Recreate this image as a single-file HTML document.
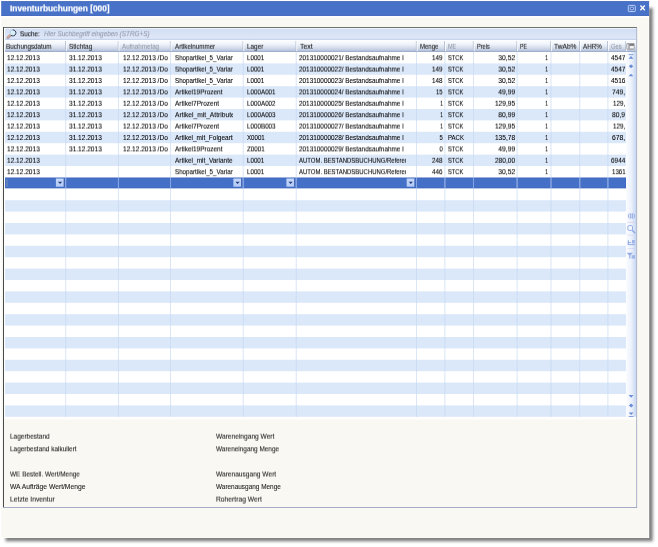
<!DOCTYPE html>
<html><head><meta charset="utf-8"><title>Inventurbuchungen [000]</title>
<style>
html,body{margin:0;padding:0;}
body{width:658px;height:547px;overflow:hidden;background:#fff;position:relative;font-family:"Liberation Sans",sans-serif;font-size:6.9px;color:#000;-webkit-text-stroke:0.08px #000;}
#bg{position:absolute;left:0;top:0;}
.t{position:absolute;white-space:nowrap;overflow:hidden;line-height:12px;height:12px;}
.t span{display:inline-block;transform-origin:0 50%;white-space:pre;}
.r{text-align:right;}
.r span{transform-origin:100% 50%;}
.g{color:#9097a6;-webkit-text-stroke:0.06px #9097a6;}
.h{color:#1c1c1c;}
#title{color:#fff;font-weight:bold;font-size:8.2px;-webkit-text-stroke:0.2px #fff;}
.lbl{color:#1e1e1e;}
.f1{filter:url(#f1);}
.f2{filter:url(#f2);}
.f3{filter:url(#f3);}
.f4{filter:url(#f4);}
.f5{filter:url(#f5);}
.f6{filter:url(#f6);}
.f7{filter:url(#f7);}
.f8{filter:url(#f8);}
.f9{filter:url(#f9);}

</style></head><body>
<svg id="bg" width="658" height="547" viewBox="0 0 658 547">
<defs>
<filter id="sh" x="-5%" y="-5%" width="110%" height="110%"><feGaussianBlur stdDeviation="1.7"/></filter>
<filter id="f1" x="-2%" y="-20%" width="104%" height="140%" color-interpolation-filters="sRGB"><feConvolveMatrix order="1 3" kernelMatrix="0 0.9 0.1" divisor="1" edgeMode="none" preserveAlpha="false"/></filter>
<filter id="f2" x="-2%" y="-20%" width="104%" height="140%" color-interpolation-filters="sRGB"><feConvolveMatrix order="1 3" kernelMatrix="0 0.8 0.2" divisor="1" edgeMode="none" preserveAlpha="false"/></filter>
<filter id="f3" x="-2%" y="-20%" width="104%" height="140%" color-interpolation-filters="sRGB"><feConvolveMatrix order="1 3" kernelMatrix="0 0.7 0.3" divisor="1" edgeMode="none" preserveAlpha="false"/></filter>
<filter id="f4" x="-2%" y="-20%" width="104%" height="140%" color-interpolation-filters="sRGB"><feConvolveMatrix order="1 3" kernelMatrix="0 0.6 0.4" divisor="1" edgeMode="none" preserveAlpha="false"/></filter>
<filter id="f5" x="-2%" y="-20%" width="104%" height="140%" color-interpolation-filters="sRGB"><feConvolveMatrix order="1 3" kernelMatrix="0 0.5 0.5" divisor="1" edgeMode="none" preserveAlpha="false"/></filter>
<filter id="f6" x="-2%" y="-20%" width="104%" height="140%" color-interpolation-filters="sRGB"><feConvolveMatrix order="1 3" kernelMatrix="0 0.4 0.6" divisor="1" edgeMode="none" preserveAlpha="false"/></filter>
<filter id="f7" x="-2%" y="-20%" width="104%" height="140%" color-interpolation-filters="sRGB"><feConvolveMatrix order="1 3" kernelMatrix="0 0.3 0.7" divisor="1" edgeMode="none" preserveAlpha="false"/></filter>
<filter id="f8" x="-2%" y="-20%" width="104%" height="140%" color-interpolation-filters="sRGB"><feConvolveMatrix order="1 3" kernelMatrix="0 0.2 0.8" divisor="1" edgeMode="none" preserveAlpha="false"/></filter>
<filter id="f9" x="-2%" y="-20%" width="104%" height="140%" color-interpolation-filters="sRGB"><feConvolveMatrix order="1 3" kernelMatrix="0 0.1 0.9" divisor="1" edgeMode="none" preserveAlpha="false"/></filter>
<linearGradient id="hd" x1="0" y1="0" x2="0" y2="1"><stop offset="0" stop-color="#fdfeff"/><stop offset="0.35" stop-color="#f0f4fa"/><stop offset="0.7" stop-color="#d2dbeb"/><stop offset="1" stop-color="#adbbd7"/></linearGradient>
<linearGradient id="sb" x1="0" y1="0" x2="1" y2="0"><stop offset="0" stop-color="#fbfcff"/><stop offset="0.55" stop-color="#eaf0fb"/><stop offset="1" stop-color="#c4d5f1"/></linearGradient>
<linearGradient id="sr" x1="0" y1="0" x2="0" y2="1"><stop offset="0" stop-color="#d2def4"/><stop offset="1" stop-color="#dfe8f8"/></linearGradient>
<linearGradient id="dd" x1="0" y1="0" x2="0" y2="1"><stop offset="0" stop-color="#c6d8fa"/><stop offset="1" stop-color="#b2caf6"/></linearGradient>
</defs>
<rect x="5.5" y="8.0" width="647.3" height="533.3" fill="#000" opacity="0.5" filter="url(#sh)"/>
<rect x="1.2" y="1.3" width="647.9" height="536.6" fill="#faf8f3"/>
<rect x="648.3000000000001" y="1.3" width="0.8" height="536.6" fill="#ffffff"/>
<rect x="1.2" y="537.1" width="647.9" height="0.8" fill="#ffffff"/>
<rect x="1.2" y="15.8" width="647.9" height="1.9" fill="#fefefd"/>
<rect x="1.2" y="1.3" width="647.9" height="14.6" fill="#4872c8"/>
<rect x="1.2" y="1.3" width="647.9" height="0.7" fill="#3f65ba"/>
<rect x="1.2" y="15.2" width="647.9" height="0.7" fill="#3f65ba"/>
<rect x="628.3" y="5.4" width="7.0" height="6.2" rx="0.8" fill="none" stroke="#c9d9fb" stroke-width="0.9"/>
<rect x="630.2" y="7.2" width="3.2" height="2.6" rx="0.5" fill="#3a5cae" stroke="#c9d9fb" stroke-width="0.8"/>
<path d="M640.4 5.5 L644.8 10.3 M644.8 5.5 L640.4 10.3" stroke="#ffffff" stroke-width="1.35" fill="none"/>
<rect x="4" y="28" width="632.6" height="391.40" fill="#fff"/>
<rect x="5.1" y="28.6" width="631.10" height="11.0" fill="url(#sr)"/>
<rect x="5.1" y="38.9" width="631.10" height="0.8" fill="#b7c7e5"/>
<rect x="5.1" y="40" width="631.10" height="11.7" fill="url(#hd)"/>
<rect x="5.1" y="51.1" width="631.10" height="0.8" fill="#95a6c6"/>
<rect x="5.1" y="63.400" width="620.90" height="11.4" fill="#dbe8fa"/>
<rect x="5.1" y="86.200" width="620.90" height="11.4" fill="#dbe8fa"/>
<rect x="5.1" y="109.000" width="620.90" height="11.4" fill="#dbe8fa"/>
<rect x="5.1" y="131.800" width="620.90" height="11.4" fill="#dbe8fa"/>
<rect x="5.1" y="154.600" width="620.90" height="11.4" fill="#dbe8fa"/>
<rect x="5.1" y="177.700" width="620.90" height="10.500" fill="#4570c8"/>
<rect x="5.35" y="177.950" width="620.40" height="10.000" fill="none" stroke="#3b60b6" stroke-width="0.5"/>
<rect x="6.4" y="179.100" width="1.1" height="7.4" fill="#8293ad" opacity="0.8"/>
<rect x="5.1" y="200.200" width="620.90" height="11.4" fill="#dbe8fa"/>
<rect x="5.1" y="223.000" width="620.90" height="11.4" fill="#dbe8fa"/>
<rect x="5.1" y="245.800" width="620.90" height="11.4" fill="#dbe8fa"/>
<rect x="5.1" y="268.600" width="620.90" height="11.4" fill="#dbe8fa"/>
<rect x="5.1" y="291.400" width="620.90" height="11.4" fill="#dbe8fa"/>
<rect x="5.1" y="314.200" width="620.90" height="11.4" fill="#dbe8fa"/>
<rect x="5.1" y="337.000" width="620.90" height="11.4" fill="#dbe8fa"/>
<rect x="5.1" y="359.800" width="620.90" height="11.4" fill="#dbe8fa"/>
<rect x="5.1" y="382.600" width="620.90" height="11.4" fill="#dbe8fa"/>
<rect x="5.1" y="405.400" width="620.90" height="11.4" fill="#dbe8fa"/>
<rect x="65.25" y="52.0" width="0.9" height="364.80" fill="#c3d5f1" opacity="0.7"/>
<rect x="65.25" y="177.70" width="0.9" height="10.500" fill="#86a3e2"/>
<rect x="117.95" y="52.0" width="0.9" height="364.80" fill="#c3d5f1" opacity="0.7"/>
<rect x="117.95" y="177.70" width="0.9" height="10.500" fill="#86a3e2"/>
<rect x="170.05" y="52.0" width="0.9" height="364.80" fill="#c3d5f1" opacity="0.7"/>
<rect x="170.05" y="177.70" width="0.9" height="10.500" fill="#86a3e2"/>
<rect x="242.75" y="52.0" width="0.9" height="364.80" fill="#c3d5f1" opacity="0.7"/>
<rect x="242.75" y="177.70" width="0.9" height="10.500" fill="#86a3e2"/>
<rect x="295.75" y="52.0" width="0.9" height="364.80" fill="#c3d5f1" opacity="0.7"/>
<rect x="295.75" y="177.70" width="0.9" height="10.500" fill="#86a3e2"/>
<rect x="416.05" y="52.0" width="0.9" height="364.80" fill="#c3d5f1" opacity="0.7"/>
<rect x="416.05" y="177.70" width="0.9" height="10.500" fill="#86a3e2"/>
<rect x="444.45" y="52.0" width="0.9" height="364.80" fill="#c3d5f1" opacity="0.7"/>
<rect x="444.45" y="177.70" width="0.9" height="10.500" fill="#86a3e2"/>
<rect x="473.05" y="52.0" width="0.9" height="364.80" fill="#c3d5f1" opacity="0.7"/>
<rect x="473.05" y="177.70" width="0.9" height="10.500" fill="#86a3e2"/>
<rect x="516.65" y="52.0" width="0.9" height="364.80" fill="#c3d5f1" opacity="0.7"/>
<rect x="516.65" y="177.70" width="0.9" height="10.500" fill="#86a3e2"/>
<rect x="550.55" y="52.0" width="0.9" height="364.80" fill="#c3d5f1" opacity="0.7"/>
<rect x="550.55" y="177.70" width="0.9" height="10.500" fill="#86a3e2"/>
<rect x="579.35" y="52.0" width="0.9" height="364.80" fill="#c3d5f1" opacity="0.7"/>
<rect x="579.35" y="177.70" width="0.9" height="10.500" fill="#86a3e2"/>
<rect x="607.45" y="52.0" width="0.9" height="364.80" fill="#c3d5f1" opacity="0.7"/>
<rect x="607.45" y="177.70" width="0.9" height="10.500" fill="#86a3e2"/>
<rect x="65.10" y="41" width="0.8" height="10.2" fill="#a7b3c8"/>
<rect x="65.90" y="41" width="0.8" height="10.2" fill="#ffffff"/>
<rect x="117.80" y="41" width="0.8" height="10.2" fill="#a7b3c8"/>
<rect x="118.60" y="41" width="0.8" height="10.2" fill="#ffffff"/>
<rect x="169.90" y="41" width="0.8" height="10.2" fill="#a7b3c8"/>
<rect x="170.70" y="41" width="0.8" height="10.2" fill="#ffffff"/>
<rect x="242.60" y="41" width="0.8" height="10.2" fill="#a7b3c8"/>
<rect x="243.40" y="41" width="0.8" height="10.2" fill="#ffffff"/>
<rect x="295.60" y="41" width="0.8" height="10.2" fill="#a7b3c8"/>
<rect x="296.40" y="41" width="0.8" height="10.2" fill="#ffffff"/>
<rect x="415.90" y="41" width="0.8" height="10.2" fill="#a7b3c8"/>
<rect x="416.70" y="41" width="0.8" height="10.2" fill="#ffffff"/>
<rect x="444.30" y="41" width="0.8" height="10.2" fill="#a7b3c8"/>
<rect x="445.10" y="41" width="0.8" height="10.2" fill="#ffffff"/>
<rect x="472.90" y="41" width="0.8" height="10.2" fill="#a7b3c8"/>
<rect x="473.70" y="41" width="0.8" height="10.2" fill="#ffffff"/>
<rect x="516.50" y="41" width="0.8" height="10.2" fill="#a7b3c8"/>
<rect x="517.30" y="41" width="0.8" height="10.2" fill="#ffffff"/>
<rect x="550.40" y="41" width="0.8" height="10.2" fill="#a7b3c8"/>
<rect x="551.20" y="41" width="0.8" height="10.2" fill="#ffffff"/>
<rect x="579.20" y="41" width="0.8" height="10.2" fill="#a7b3c8"/>
<rect x="580.00" y="41" width="0.8" height="10.2" fill="#ffffff"/>
<rect x="607.30" y="41" width="0.8" height="10.2" fill="#a7b3c8"/>
<rect x="608.10" y="41" width="0.8" height="10.2" fill="#ffffff"/>
<rect x="625.40" y="41" width="0.8" height="10.2" fill="#a7b3c8"/>
<rect x="626.20" y="41" width="0.8" height="10.2" fill="#ffffff"/>
<rect x="55.90" y="178.50" width="7.90" height="8.20" fill="url(#dd)"/>
<rect x="63.80" y="178.50" width="0.7" height="8.20" fill="#3a5aa8"/>
<path d="M57.95 181.70 L62.15 181.70 L60.05 183.90 Z" fill="#253a78"/>
<rect x="233.40" y="178.50" width="7.90" height="8.20" fill="url(#dd)"/>
<rect x="241.30" y="178.50" width="0.7" height="8.20" fill="#3a5aa8"/>
<path d="M235.45 181.70 L239.65 181.70 L237.55 183.90 Z" fill="#253a78"/>
<rect x="286.40" y="178.50" width="7.90" height="8.20" fill="url(#dd)"/>
<rect x="294.30" y="178.50" width="0.7" height="8.20" fill="#3a5aa8"/>
<path d="M288.45 181.70 L292.65 181.70 L290.55 183.90 Z" fill="#253a78"/>
<rect x="406.70" y="178.50" width="7.90" height="8.20" fill="url(#dd)"/>
<rect x="414.60" y="178.50" width="0.7" height="8.20" fill="#3a5aa8"/>
<path d="M408.75 181.70 L412.95 181.70 L410.85 183.90 Z" fill="#253a78"/>
<rect x="626.2" y="52" width="10.00" height="364.80" fill="url(#sb)"/>
<g><rect x="626.3" y="42.9" width="8.4" height="6.8" rx="1.1" fill="#a6a7aa"/><rect x="627.3" y="44.2" width="0.9" height="4.4" fill="#f3f3f3"/><rect x="629.5" y="44.2" width="4.5" height="1.2" fill="#6d6e72"/><rect x="629.9" y="46.1" width="3.9" height="2.3" fill="#f6f6f6"/></g>
<rect x="628.6" y="54.3" width="4.8" height="0.8" fill="#6a8cd9"/><path d="M628.6 58.7 L631 56.1 L633.4 58.7 Z" fill="#6a8cd9"/>
<path d="M628.8 66.2 L631 64.2 L633.2 66.2 L631 68.2 Z" fill="#6a8cd9"/>
<path d="M628.6 76.3 L631 73.8 L633.4 76.3 Z" fill="#6a8cd9"/>
<path d="M628.7 395.1 L633.5 395.1 L631.1 397.7 Z" fill="#6a8cd9"/>
<path d="M628.9 405.4 L631.1 403.4 L633.3 405.4 L631.1 407.4 Z" fill="#6a8cd9"/>
<path d="M628.7 412.4 L633.5 412.4 L631.1 415.0 Z" fill="#6a8cd9"/><rect x="628.7" y="416.1" width="4.8" height="0.8" fill="#6a8cd9"/>
<g fill="none" stroke="#8ea7e2" stroke-width="0.9"><path d="M629.2 213.6 Q627.6 216 629.2 218.4"/><path d="M633.8 213.6 Q635.4 216 633.8 218.4"/><path d="M630.7 213.4 V218.6 M632.3 213.4 V218.6" stroke-width="1.0"/></g>
<rect x="627.5" y="221.9" width="7.5" height="0.6" fill="#d9c6dc"/>
<g fill="none" stroke="#8ea7e2" stroke-width="0.9"><rect x="627.9" y="225.6" width="4.6" height="4.8" rx="1.2" fill="#f4f8ff"/><path d="M632.2 230.2 L635.2 233.2" stroke-width="1.5"/></g>
<rect x="627.5" y="234.8" width="7.5" height="0.6" fill="#d5d5e8"/>
<g fill="#8ea7e2"><rect x="627.8" y="240.2" width="1.0" height="4.8"/><rect x="627.8" y="242.2" width="3.4" height="0.9"/><rect x="627.8" y="244.2" width="7.2" height="0.9"/><rect x="632.0" y="240.0" width="2.8" height="3.4" opacity="0.8"/></g>
<rect x="627.5" y="248.5" width="7.5" height="0.6" fill="#cfc8ec"/>
<g fill="#8ea7e2"><path d="M626.6 252.8 L633.0 252.8 L630.4 255.6 L630.4 258.6 L629.2 258.6 L629.2 255.6 Z" opacity="0.9"/><rect x="631.6" y="255.2" width="3.4" height="3.4" opacity="0.75"/></g>
<g><path d="M10.6 35.3 L7.9 37.5" stroke="#4a4660" stroke-width="2.6" stroke-linecap="round" opacity="0.55"/><path d="M10.5 35.0 L7.7 37.2" stroke="#d3a996" stroke-width="2.0" stroke-linecap="round"/><circle cx="13.0" cy="32.8" r="2.9" fill="#d6f1f5"/><path d="M12.6 29.9 A3.0 3.0 0 1 1 10.9 35.1" fill="none" stroke="#2d3355" stroke-width="0.95"/><path d="M10.2 33.6 A3.0 3.0 0 0 1 12.4 29.9" fill="none" stroke="#aebfe0" stroke-width="0.7"/></g>
<rect x="3.0" y="27.1" width="633.90" height="0.85" fill="#565b58"/>
<rect x="3.0" y="27.0" width="1.0" height="480.50" fill="#474c4a"/>
<rect x="636.20" y="28.0" width="0.9" height="479.90" fill="#a4aec8"/>
<rect x="4.0" y="507.00" width="633.10" height="0.9" fill="#99a3bf"/>
</svg>
<div id="title" class="t f4" style="left:10.30px;top:3px;width:130.00px;"><span style="transform:scaleX(1.0183)">Inventurbuchungen [000]</span></div>
<div class="t f3" style="left:19.80px;top:28px;width:30.00px;"><span style="transform:scaleX(0.9183)">Suche:</span></div>
<div class="t g f2" style="left:43.90px;top:28px;width:140.00px;font-style:italic;"><span style="transform:scaleX(0.9267)">Hier Suchbegriff eingeben (STRG+S)</span></div>
<div class="t h f8" style="left:6.30px;top:40px;width:58.60px;"><span style="transform:scaleX(0.9154)">Buchungsdatum</span></div>
<div class="t h f8" style="left:69.00px;top:40px;width:48.60px;"><span style="transform:scaleX(0.9355)">Stichtag</span></div>
<div class="t g f8" style="left:122.40px;top:40px;width:47.30px;"><span style="transform:scaleX(0.9049)">Aufnahmetag</span></div>
<div class="t h f8" style="left:174.50px;top:40px;width:67.90px;"><span style="transform:scaleX(0.9050)">Artikelnummer</span></div>
<div class="t h f8" style="left:246.50px;top:40px;width:48.90px;"><span style="transform:scaleX(0.9248)">Lager</span></div>
<div class="t h f8" style="left:299.70px;top:40px;width:116.00px;"><span style="transform:scaleX(1.0126)">Text</span></div>
<div class="t h f8" style="left:419.50px;top:40px;width:24.60px;"><span style="transform:scaleX(0.8729)">Menge</span></div>
<div class="t g f8" style="left:447.90px;top:40px;width:24.80px;"><span style="transform:scaleX(0.8024)">ME</span></div>
<div class="t h f8" style="left:476.70px;top:40px;width:39.60px;"><span style="transform:scaleX(0.8151)">Preis</span></div>
<div class="t h f8" style="left:520.10px;top:40px;width:30.10px;"><span style="transform:scaleX(0.7606)">PE</span></div>
<div class="t h f8" style="left:554.00px;top:40px;width:25.00px;"><span style="transform:scaleX(0.9626)">TwAb%</span></div>
<div class="t h f8" style="left:582.80px;top:40px;width:24.30px;"><span style="transform:scaleX(0.9088)">AHR%</span></div>
<div class="t g f8" style="left:610.90px;top:40px;width:14.30px;"><span style="transform:scaleX(0.8544)">Ges</span></div>
<div class="t f2" style="left:7.30px;top:52px;width:48.10px;"><span style="transform:scaleX(0.9507)">12.12.2013</span></div>
<div class="t f2" style="left:69.30px;top:52px;width:48.70px;"><span style="transform:scaleX(0.9507)">31.12.2013</span></div>
<div class="t f2" style="left:122.70px;top:52px;width:47.40px;"><span style="transform:scaleX(0.9507)">12.12.2013 /Do</span></div>
<div class="t f2" style="left:174.50px;top:52px;width:58.40px;"><span style="transform:scaleX(0.9034)">Shopartikel_5_Variante</span></div>
<div class="t f2" style="left:246.60px;top:52px;width:39.30px;"><span style="transform:scaleX(0.9024)">L0001</span></div>
<div class="t f2" style="left:299.40px;top:52px;width:106.80px;"><span style="transform:scaleX(0.9285)">201310000021/ Bestandsaufnahme l</span></div>
<div class="t r f2" style="left:417.50px;top:52px;width:25.20px;"><span style="transform:scaleX(0.9130)">149</span></div>
<div class="t f2" style="left:447.90px;top:52px;width:25.20px;"><span style="transform:scaleX(0.8319)">STCK</span></div>
<div class="t r f2" style="left:474.50px;top:52px;width:40.40px;"><span style="transform:scaleX(0.9855)">30,52</span></div>
<div class="t r f2" style="left:518.10px;top:52px;width:30.10px;"><span style="transform:scaleX(0.7024)">1</span></div>
<div class="t f2" style="left:610.90px;top:52px;width:14.70px;"><span style="transform:scaleX(0.9450)">4547</span></div>
<div class="t f6" style="left:7.30px;top:63px;width:48.10px;"><span style="transform:scaleX(0.9507)">12.12.2013</span></div>
<div class="t f6" style="left:69.30px;top:63px;width:48.70px;"><span style="transform:scaleX(0.9507)">31.12.2013</span></div>
<div class="t f6" style="left:122.70px;top:63px;width:47.40px;"><span style="transform:scaleX(0.9507)">12.12.2013 /Do</span></div>
<div class="t f6" style="left:174.50px;top:63px;width:58.40px;"><span style="transform:scaleX(0.9034)">Shopartikel_5_Variante</span></div>
<div class="t f6" style="left:246.60px;top:63px;width:39.30px;"><span style="transform:scaleX(0.9024)">L0001</span></div>
<div class="t f6" style="left:299.40px;top:63px;width:106.80px;"><span style="transform:scaleX(0.9285)">201310000022/ Bestandsaufnahme l</span></div>
<div class="t r f6" style="left:417.50px;top:63px;width:25.20px;"><span style="transform:scaleX(0.9130)">149</span></div>
<div class="t f6" style="left:447.90px;top:63px;width:25.20px;"><span style="transform:scaleX(0.8319)">STCK</span></div>
<div class="t r f6" style="left:474.50px;top:63px;width:40.40px;"><span style="transform:scaleX(0.9855)">30,52</span></div>
<div class="t r f6" style="left:518.10px;top:63px;width:30.10px;"><span style="transform:scaleX(0.7024)">1</span></div>
<div class="t f6" style="left:610.90px;top:63px;width:14.70px;"><span style="transform:scaleX(0.9450)">4547</span></div>
<div class="t" style="left:7.30px;top:75px;width:48.10px;"><span style="transform:scaleX(0.9507)">12.12.2013</span></div>
<div class="t" style="left:69.30px;top:75px;width:48.70px;"><span style="transform:scaleX(0.9507)">31.12.2013</span></div>
<div class="t" style="left:122.70px;top:75px;width:47.40px;"><span style="transform:scaleX(0.9507)">12.12.2013 /Do</span></div>
<div class="t" style="left:174.50px;top:75px;width:58.40px;"><span style="transform:scaleX(0.9034)">Shopartikel_5_Variante</span></div>
<div class="t" style="left:246.60px;top:75px;width:39.30px;"><span style="transform:scaleX(0.9024)">L0001</span></div>
<div class="t" style="left:299.40px;top:75px;width:106.80px;"><span style="transform:scaleX(0.9285)">201310000023/ Bestandsaufnahme l</span></div>
<div class="t r" style="left:417.50px;top:75px;width:25.20px;"><span style="transform:scaleX(0.9130)">148</span></div>
<div class="t" style="left:447.90px;top:75px;width:25.20px;"><span style="transform:scaleX(0.8319)">STCK</span></div>
<div class="t r" style="left:474.50px;top:75px;width:40.40px;"><span style="transform:scaleX(0.9855)">30,52</span></div>
<div class="t r" style="left:518.10px;top:75px;width:30.10px;"><span style="transform:scaleX(0.7024)">1</span></div>
<div class="t" style="left:610.90px;top:75px;width:14.70px;"><span style="transform:scaleX(0.9450)">4516</span></div>
<div class="t f4" style="left:7.30px;top:86px;width:48.10px;"><span style="transform:scaleX(0.9507)">12.12.2013</span></div>
<div class="t f4" style="left:69.30px;top:86px;width:48.70px;"><span style="transform:scaleX(0.9507)">31.12.2013</span></div>
<div class="t f4" style="left:122.70px;top:86px;width:47.40px;"><span style="transform:scaleX(0.9507)">12.12.2013 /Do</span></div>
<div class="t f4" style="left:174.50px;top:86px;width:58.40px;"><span style="transform:scaleX(0.9394)">Artikel19Prozent</span></div>
<div class="t f4" style="left:246.60px;top:86px;width:39.30px;"><span style="transform:scaleX(0.9102)">L000A001</span></div>
<div class="t f4" style="left:299.40px;top:86px;width:106.80px;"><span style="transform:scaleX(0.9285)">201310000024/ Bestandsaufnahme l</span></div>
<div class="t r f4" style="left:417.50px;top:86px;width:25.20px;"><span style="transform:scaleX(0.8603)">15</span></div>
<div class="t f4" style="left:447.90px;top:86px;width:25.20px;"><span style="transform:scaleX(0.8319)">STCK</span></div>
<div class="t r f4" style="left:474.50px;top:86px;width:40.40px;"><span style="transform:scaleX(0.9797)">49,99</span></div>
<div class="t r f4" style="left:518.10px;top:86px;width:30.10px;"><span style="transform:scaleX(0.7024)">1</span></div>
<div class="t f4" style="left:612.20px;top:86px;width:13.40px;"><span style="transform:scaleX(0.9835)">749,</span></div>
<div class="t f8" style="left:7.30px;top:97px;width:48.10px;"><span style="transform:scaleX(0.9507)">12.12.2013</span></div>
<div class="t f8" style="left:69.30px;top:97px;width:48.70px;"><span style="transform:scaleX(0.9507)">31.12.2013</span></div>
<div class="t f8" style="left:122.70px;top:97px;width:47.40px;"><span style="transform:scaleX(0.9507)">12.12.2013 /Do</span></div>
<div class="t f8" style="left:174.50px;top:97px;width:58.40px;"><span style="transform:scaleX(0.9436)">Artikel7Prozent</span></div>
<div class="t f8" style="left:246.60px;top:97px;width:39.30px;"><span style="transform:scaleX(0.9102)">L000A002</span></div>
<div class="t f8" style="left:299.40px;top:97px;width:106.80px;"><span style="transform:scaleX(0.9285)">201310000025/ Bestandsaufnahme l</span></div>
<div class="t r f8" style="left:417.50px;top:97px;width:25.20px;"><span style="transform:scaleX(0.7024)">1</span></div>
<div class="t f8" style="left:447.90px;top:97px;width:25.20px;"><span style="transform:scaleX(0.8319)">STCK</span></div>
<div class="t r f8" style="left:474.50px;top:97px;width:40.40px;"><span style="transform:scaleX(0.9583)">129,95</span></div>
<div class="t r f8" style="left:518.10px;top:97px;width:30.10px;"><span style="transform:scaleX(0.7024)">1</span></div>
<div class="t f8" style="left:612.90px;top:97px;width:12.70px;"><span style="transform:scaleX(0.9090)">129,</span></div>
<div class="t f2" style="left:7.30px;top:109px;width:48.10px;"><span style="transform:scaleX(0.9507)">12.12.2013</span></div>
<div class="t f2" style="left:69.30px;top:109px;width:48.70px;"><span style="transform:scaleX(0.9507)">31.12.2013</span></div>
<div class="t f2" style="left:122.70px;top:109px;width:47.40px;"><span style="transform:scaleX(0.9507)">12.12.2013 /Do</span></div>
<div class="t f2" style="left:174.50px;top:109px;width:58.40px;"><span style="transform:scaleX(0.9684)">Artikel_mit_Attributen</span></div>
<div class="t f2" style="left:246.60px;top:109px;width:39.30px;"><span style="transform:scaleX(0.9102)">L000A003</span></div>
<div class="t f2" style="left:299.40px;top:109px;width:106.80px;"><span style="transform:scaleX(0.9285)">201310000026/ Bestandsaufnahme l</span></div>
<div class="t r f2" style="left:417.50px;top:109px;width:25.20px;"><span style="transform:scaleX(0.7024)">1</span></div>
<div class="t f2" style="left:447.90px;top:109px;width:25.20px;"><span style="transform:scaleX(0.8319)">STCK</span></div>
<div class="t r f2" style="left:474.50px;top:109px;width:40.40px;"><span style="transform:scaleX(0.9797)">80,99</span></div>
<div class="t r f2" style="left:518.10px;top:109px;width:30.10px;"><span style="transform:scaleX(0.7024)">1</span></div>
<div class="t f2" style="left:611.90px;top:109px;width:13.70px;"><span style="transform:scaleX(0.9760)">80,9</span></div>
<div class="t f6" style="left:7.30px;top:120px;width:48.10px;"><span style="transform:scaleX(0.9507)">12.12.2013</span></div>
<div class="t f6" style="left:69.30px;top:120px;width:48.70px;"><span style="transform:scaleX(0.9507)">31.12.2013</span></div>
<div class="t f6" style="left:122.70px;top:120px;width:47.40px;"><span style="transform:scaleX(0.9507)">12.12.2013 /Do</span></div>
<div class="t f6" style="left:174.50px;top:120px;width:58.40px;"><span style="transform:scaleX(0.9436)">Artikel7Prozent</span></div>
<div class="t f6" style="left:246.60px;top:120px;width:39.30px;"><span style="transform:scaleX(0.9102)">L000B003</span></div>
<div class="t f6" style="left:299.40px;top:120px;width:106.80px;"><span style="transform:scaleX(0.9285)">201310000027/ Bestandsaufnahme l</span></div>
<div class="t r f6" style="left:417.50px;top:120px;width:25.20px;"><span style="transform:scaleX(0.7024)">1</span></div>
<div class="t f6" style="left:447.90px;top:120px;width:25.20px;"><span style="transform:scaleX(0.8319)">STCK</span></div>
<div class="t r f6" style="left:474.50px;top:120px;width:40.40px;"><span style="transform:scaleX(0.9583)">129,95</span></div>
<div class="t r f6" style="left:518.10px;top:120px;width:30.10px;"><span style="transform:scaleX(0.7024)">1</span></div>
<div class="t f6" style="left:612.90px;top:120px;width:12.70px;"><span style="transform:scaleX(0.9090)">129,</span></div>
<div class="t" style="left:7.30px;top:132px;width:48.10px;"><span style="transform:scaleX(0.9507)">12.12.2013</span></div>
<div class="t" style="left:69.30px;top:132px;width:48.70px;"><span style="transform:scaleX(0.9507)">31.12.2013</span></div>
<div class="t" style="left:122.70px;top:132px;width:47.40px;"><span style="transform:scaleX(0.9507)">12.12.2013 /Do</span></div>
<div class="t" style="left:174.50px;top:132px;width:58.40px;"><span style="transform:scaleX(0.9399)">Artikel_mit_Folgeartikel</span></div>
<div class="t" style="left:246.60px;top:132px;width:39.30px;"><span style="transform:scaleX(0.8928)">X0001</span></div>
<div class="t" style="left:299.40px;top:132px;width:106.80px;"><span style="transform:scaleX(0.9285)">201310000028/ Bestandsaufnahme l</span></div>
<div class="t r" style="left:417.50px;top:132px;width:25.20px;"><span style="transform:scaleX(0.8585)">5</span></div>
<div class="t" style="left:447.90px;top:132px;width:25.20px;"><span style="transform:scaleX(0.8705)">PACK</span></div>
<div class="t r" style="left:474.50px;top:132px;width:40.40px;"><span style="transform:scaleX(0.9583)">135,78</span></div>
<div class="t r" style="left:518.10px;top:132px;width:30.10px;"><span style="transform:scaleX(0.7024)">1</span></div>
<div class="t" style="left:612.20px;top:132px;width:13.40px;"><span style="transform:scaleX(0.9835)">678,</span></div>
<div class="t f4" style="left:7.30px;top:143px;width:48.10px;"><span style="transform:scaleX(0.9507)">12.12.2013</span></div>
<div class="t f4" style="left:69.30px;top:143px;width:48.70px;"><span style="transform:scaleX(0.9507)">31.12.2013</span></div>
<div class="t f4" style="left:122.70px;top:143px;width:47.40px;"><span style="transform:scaleX(0.9507)">12.12.2013 /Do</span></div>
<div class="t f4" style="left:174.50px;top:143px;width:58.40px;"><span style="transform:scaleX(0.9394)">Artikel19Prozent</span></div>
<div class="t f4" style="left:246.60px;top:143px;width:39.30px;"><span style="transform:scaleX(0.9004)">Z0001</span></div>
<div class="t f4" style="left:299.40px;top:143px;width:106.80px;"><span style="transform:scaleX(0.9285)">201310000029/ Bestandsaufnahme l</span></div>
<div class="t r f4" style="left:417.50px;top:143px;width:25.20px;"><span style="transform:scaleX(0.8585)">0</span></div>
<div class="t f4" style="left:447.90px;top:143px;width:25.20px;"><span style="transform:scaleX(0.8319)">STCK</span></div>
<div class="t r f4" style="left:474.50px;top:143px;width:40.40px;"><span style="transform:scaleX(0.9797)">49,99</span></div>
<div class="t r f4" style="left:518.10px;top:143px;width:30.10px;"><span style="transform:scaleX(0.7024)">1</span></div>
<div class="t f8" style="left:7.30px;top:154px;width:48.10px;"><span style="transform:scaleX(0.9507)">12.12.2013</span></div>
<div class="t f8" style="left:174.50px;top:154px;width:58.40px;"><span style="transform:scaleX(0.9418)">Artikel_mit_Variante</span></div>
<div class="t f8" style="left:246.60px;top:154px;width:39.30px;"><span style="transform:scaleX(0.9024)">L0001</span></div>
<div class="t f8" style="left:299.40px;top:154px;width:106.80px;"><span style="transform:scaleX(0.8635)">AUTOM. BESTANDSBUCHUNG/Referenz</span></div>
<div class="t r f8" style="left:417.50px;top:154px;width:25.20px;"><span style="transform:scaleX(0.9130)">248</span></div>
<div class="t f8" style="left:447.90px;top:154px;width:25.20px;"><span style="transform:scaleX(0.8319)">STCK</span></div>
<div class="t r f8" style="left:474.50px;top:154px;width:40.40px;"><span style="transform:scaleX(0.9583)">280,00</span></div>
<div class="t r f8" style="left:518.10px;top:154px;width:30.10px;"><span style="transform:scaleX(0.7024)">1</span></div>
<div class="t f8" style="left:611.20px;top:154px;width:14.40px;"><span style="transform:scaleX(0.9320)">6944</span></div>
<div class="t f2" style="left:7.30px;top:166px;width:48.10px;"><span style="transform:scaleX(0.9507)">12.12.2013</span></div>
<div class="t f2" style="left:174.50px;top:166px;width:58.40px;"><span style="transform:scaleX(0.9034)">Shopartikel_5_Variante</span></div>
<div class="t f2" style="left:246.60px;top:166px;width:39.30px;"><span style="transform:scaleX(0.9024)">L0001</span></div>
<div class="t f2" style="left:299.40px;top:166px;width:106.80px;"><span style="transform:scaleX(0.8635)">AUTOM. BESTANDSBUCHUNG/Referenz</span></div>
<div class="t r f2" style="left:417.50px;top:166px;width:25.20px;"><span style="transform:scaleX(0.9130)">446</span></div>
<div class="t f2" style="left:447.90px;top:166px;width:25.20px;"><span style="transform:scaleX(0.8319)">STCK</span></div>
<div class="t r f2" style="left:474.50px;top:166px;width:40.40px;"><span style="transform:scaleX(0.9855)">30,52</span></div>
<div class="t r f2" style="left:518.10px;top:166px;width:30.10px;"><span style="transform:scaleX(0.7024)">1</span></div>
<div class="t f2" style="left:612.00px;top:166px;width:13.60px;"><span style="transform:scaleX(0.8864)">1361</span></div>
<div class="t lbl f7" style="left:10.00px;top:430px;width:120.00px;"><span style="transform:scaleX(0.9394)">Lagerbestand</span></div>
<div class="t lbl f3" style="left:10.00px;top:443px;width:120.00px;"><span style="transform:scaleX(0.9347)">Lagerbestand kalkuliert</span></div>
<div class="t lbl f5" style="left:10.00px;top:468px;width:120.00px;"><span style="transform:scaleX(0.9328)">WE Bestell. Wert/Menge</span></div>
<div class="t lbl" style="left:10.00px;top:481px;width:120.00px;"><span style="transform:scaleX(0.9745)">WA Aufträge Wert/Menge</span></div>
<div class="t lbl f6" style="left:10.00px;top:493px;width:120.00px;"><span style="transform:scaleX(0.9804)">Letzte Inventur</span></div>
<div class="t lbl f7" style="left:216.30px;top:430px;width:120.00px;"><span style="transform:scaleX(0.9589)">Wareneingang Wert</span></div>
<div class="t lbl f3" style="left:216.30px;top:443px;width:120.00px;"><span style="transform:scaleX(0.9342)">Wareneingang Menge</span></div>
<div class="t lbl f5" style="left:216.30px;top:468px;width:120.00px;"><span style="transform:scaleX(0.9582)">Warenausgang Wert</span></div>
<div class="t lbl" style="left:216.30px;top:481px;width:120.00px;"><span style="transform:scaleX(0.9328)">Warenausgang Menge</span></div>
<div class="t lbl f6" style="left:216.30px;top:493px;width:120.00px;"><span style="transform:scaleX(0.9748)">Rohertrag Wert</span></div>
</body></html>
